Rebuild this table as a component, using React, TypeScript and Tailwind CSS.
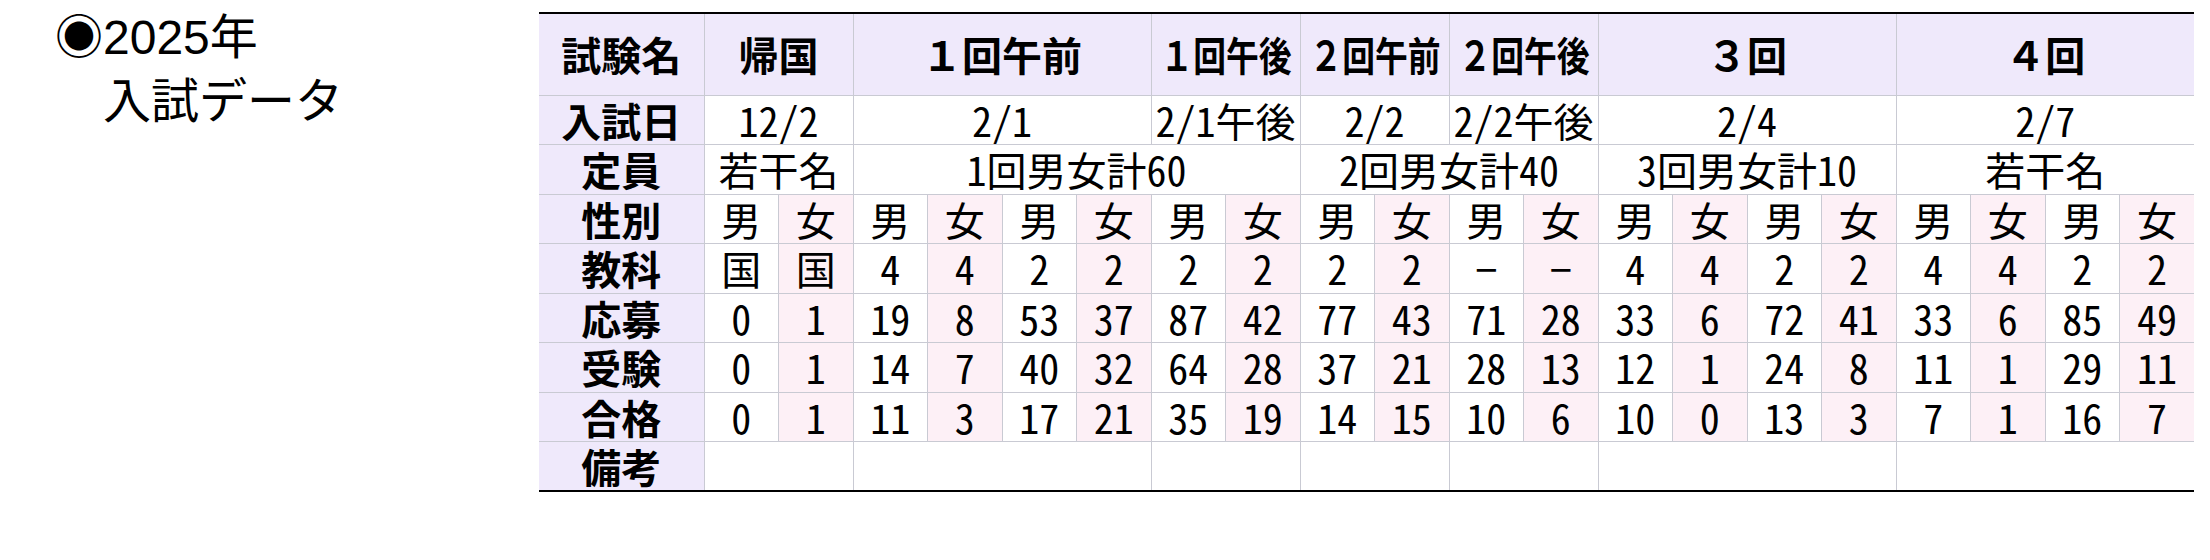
const groups = [
  { name: "帰国", date: "12/2", span: 2, narrow: false },
  { name: "１回午前", date: "2/1", span: 4, narrow: false },
  { name: "１回午後", date: "2/1午後", span: 2, narrow: true },
  { name: "２回午前", date: "2/2", span: 2, narrow: true },
  { name: "２回午後", date: "2/2午後", span: 2, narrow: true },
  { name: "３回", date: "2/4", span: 4, narrow: false },
  { name: "４回", date: "2/7", span: 4, narrow: false },
];

const capacity = [
  { text: "若干名", span: 2 },
  { text: "1回男女計60", span: 6 },
  { text: "2回男女計40", span: 4 },
  { text: "3回男女計10", span: 4 },
  { text: "若干名", span: 4 },
];

const gender = Array.from({ length: 20 }, (_, i) => (i % 2 === 0 ? "男" : "女"));

const rows: { label: string; values: (string | number)[] }[] = [
  { label: "性別", values: gender },
  { label: "教科", values: ["国", "国", 4, 4, 2, 2, 2, 2, 2, 2, "−", "−", 4, 4, 2, 2, 4, 4, 2, 2] },
  { label: "応募", values: [0, 1, 19, 8, 53, 37, 87, 42, 77, 43, 71, 28, 33, 6, 72, 41, 33, 6, 85, 49] },
  { label: "受験", values: [0, 1, 14, 7, 40, 32, 64, 28, 37, 21, 28, 13, 12, 1, 24, 8, 11, 1, 29, 11] },
  { label: "合格", values: [0, 1, 11, 3, 17, 21, 35, 19, 14, 15, 10, 6, 10, 0, 13, 3, 7, 1, 16, 7] },
];

const cell = "border border-[#c9cad3] text-center align-middle p-0 whitespace-nowrap";
const labelCell = `${cell} border-l-0 bg-[#efe9fb] font-bold`;

function lastCol(i: number, total: number) {
  return i === total - 1 ? "border-r-0" : "";
}

export default function App() {
  return (
    <div className="flex min-h-[560px] bg-white text-black">
      <div
        className="w-[539px] shrink-0 pl-[55px] pt-[6px] text-[48px] leading-[64px]"
        style={{ fontFamily: '"Liberation Sans", "Noto Sans CJK JP", sans-serif' }}
      >
        <div>◉2025年</div>
        <div>　入試データ</div>
      </div>

      <table
        className="mt-[12px] h-fit w-[1655px] table-fixed border-collapse text-[40px] leading-[1.15]"
        style={{ fontFamily: '"Noto Sans Mono CJK JP", "Liberation Sans Narrow", "Noto Sans CJK JP", sans-serif' }}
      >
        <colgroup>
          <col className="w-[165px]" />
          {gender.map((_, i) => (
            <col key={i} className="w-[74.5px]" />
          ))}
        </colgroup>
        <tbody>
          <tr className="h-[82px]">
            <td className={`${labelCell} border-t-2 border-t-black`}>試験名</td>
            {groups.map((g, i) => (
              <td
                key={g.name}
                colSpan={g.span}
                className={`${cell} border-t-2 border-t-black bg-[#efe9fb] font-bold ${lastCol(i, groups.length)}`}
              >
                {g.narrow ? (
                  <span className="mx-[-14px] inline-block scale-x-[0.82]">{g.name}</span>
                ) : (
                  g.name
                )}
              </td>
            ))}
          </tr>

          <tr className="h-[49.5px]">
            <td className={labelCell}>入試日</td>
            {groups.map((g, i) => (
              <td key={g.name} colSpan={g.span} className={`${cell} ${lastCol(i, groups.length)}`}>
                {g.date}
              </td>
            ))}
          </tr>

          <tr className="h-[49.5px]">
            <td className={labelCell}>定員</td>
            {capacity.map((c, i) => (
              <td key={i} colSpan={c.span} className={`${cell} ${lastCol(i, capacity.length)}`}>
                {c.text}
              </td>
            ))}
          </tr>

          {rows.map((r) => (
            <tr key={r.label} className="h-[49.5px]">
              <td className={labelCell}>{r.label}</td>
              {r.values.map((v, i) => (
                <td
                  key={i}
                  className={`${cell} ${i % 2 === 1 ? "bg-[#fdf0f6]" : ""} ${lastCol(i, r.values.length)}`}
                >
                  {v}
                </td>
              ))}
            </tr>
          ))}

          <tr className="h-[49.5px]">
            <td className={`${labelCell} border-b-2 border-b-black`}>備考</td>
            {groups.map((g, i) => (
              <td
                key={g.name}
                colSpan={g.span}
                className={`${cell} border-b-2 border-b-black ${lastCol(i, groups.length)}`}
              />
            ))}
          </tr>
        </tbody>
      </table>
    </div>
  );
}
